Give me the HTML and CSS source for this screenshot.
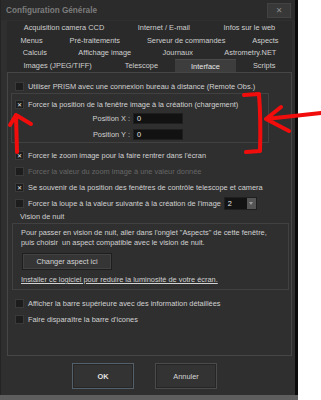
FILE: index.html
```html
<!DOCTYPE html>
<html lang="fr">
<head>
    <meta charset="UTF-8">
    <meta name="viewport" content="width=device-width, initial-scale=1.0">
    <title>Configuration Générale</title>
    <link rel="stylesheet" href="styles.css">
</head>
<body>
    <section class="window">
        <header class="title-bar">
            <span class="title">Configuration Générale</span>
            <span class="close-btn">✕</span>
        </header>

        <nav class="tabs">
            <div class="tab-row">
                <span class="tab">Acquisition camera CCD</span>
                <span class="tab">Internet / E-mail</span>
                <span class="tab">Infos sur le web</span>
            </div>
            <div class="tab-row">
                <span class="tab">Menus</span>
                <span class="tab">Pré-traitements</span>
                <span class="tab">Serveur de commandes</span>
                <span class="tab">Aspects</span>
            </div>
            <div class="tab-row">
                <span class="tab">Calculs</span>
                <span class="tab">Affichage image</span>
                <span class="tab">Journaux</span>
                <span class="tab">Astrometry.NET</span>
            </div>
            <div class="tab-row tab-row-last">
                <span class="tab">Images (JPEG/TIFF)</span>
                <span class="tab">Telescope</span>
                <span class="tab active">Interface</span>
                <span class="tab">Scripts</span>
            </div>
        </nav>

        <section class="panel">
            <div class="check-row first">
                <span class="box"></span>
                <span>Utiliser PRISM avec une connexion bureau à distance (Remote Obs.)</span>
            </div>

            <div class="group group-position">
                <div class="check-row">
                    <span class="box checked"></span>
                    <span>Forcer la position de la fenêtre image à la création (chargement)</span>
                </div>
                <div class="field-row">
                    <span class="field-label">Position X :</span>
                    <span class="field">0</span>
                </div>
                <div class="field-row field-row-y">
                    <span class="field-label">Position Y :</span>
                    <span class="field">0</span>
                </div>
            </div>

            <div class="check-row after-group">
                <span class="box checked"></span>
                <span>Forcer le zoom image pour la faire rentrer dans l'écran</span>
            </div>
            <div class="check-row disabled">
                <span class="box"></span>
                <span>Forcer la valeur du zoom image à une valeur donnée</span>
            </div>
            <div class="check-row">
                <span class="box checked"></span>
                <span>Se souvenir de la position des fenêtres de contrôle telescope et camera</span>
            </div>
            <div class="check-row">
                <span class="box"></span>
                <span>Forcer la loupe à la valeur suivante à la création de l'image</span>
                <span class="combo"><span class="combo-value">2</span><span class="combo-arrow"></span></span>
            </div>

            <div class="legend">Vision de nuit</div>
            <div class="group group-night">
                <p class="night-text">Pour passer en vision de nuit, aller dans l'onglet "Aspects" de cette fenêtre,<br>puis choisir &nbsp;un aspect compatible avec le vision de nuit.</p>
                <button class="btn btn-aspect" type="button">Changer aspect ici</button>
                <a class="night-link" href="#">Installer ce logiciel pour reduire la luminosité de votre écran.</a>
            </div>

            <div class="check-row after-night">
                <span class="box"></span>
                <span>Afficher la barre supérieure avec des information détaillées</span>
            </div>
            <div class="check-row">
                <span class="box"></span>
                <span>Faire disparaître la barre d'icones</span>
            </div>
        </section>

        <footer class="btn-box">
            <button class="btn btn-dialog btn-ok" type="submit">OK</button>
            <button class="btn btn-dialog" type="button">Annuler</button>
        </footer>
    </section>
    <div class="bottom-strip"></div>

    <!-- red marks drawn on top of the screenshot -->
    <svg class="marks" width="321" height="400" viewBox="0 0 321 400">
        <g fill="none" stroke="#f20d0d" stroke-width="4" stroke-linecap="round" stroke-linejoin="round">
            <path d="M244 95 L259 94 Q261 120 260 151 L246 152"/>
            <path d="M321 113 L266 119 M281 107 L266 119 L289 131"/>
            <path d="M17 152 L16 115 M10 125 L16 115 L31 124"/>
        </g>
    </svg>
</body>
</html>
```

FILE: styles.css
```css
body {
    margin: 0;
    background-color: white;
    font-family: "Liberation Sans", Arial, sans-serif;
    font-size: 7.4px;
    color: #d2d2d2;
}

.window {
    position: relative;
    display: flex;
    flex-direction: column;
    box-sizing: border-box;
    width: 298px;
    height: 395px;
    background-color: #2f2f2f;
    border-left: 1px solid #242424;
    border-right: 3px solid #0b0b0b;
}

.bottom-strip {
    width: 298px;
    height: 5px;
    background-color: #5e5e5e;
}

.title-bar {
    display: flex;
    align-items: center;
    justify-content: space-between;
    height: 20px;
    padding: 0 4px 0 5px;
    background-color: #2b2b2b;
}

.title {
    font-size: 8.2px;
    font-weight: bold;
    color: #7c7c7c;
}

.close-btn {
    display: flex;
    align-items: center;
    justify-content: center;
    width: 22px;
    height: 13px;
    background-color: #383838;
    border: 1px solid #424242;
    font-family: "DejaVu Sans", sans-serif;
    font-size: 8px;
    font-weight: bold;
    color: #8a8a8a;
}

.tabs {
    display: flex;
    flex-direction: column;
    margin: 1px 3px 0 6px;
    background-color: #2a2a2a;
}

.tab-row {
    display: flex;
    height: 12px;
}

.tab-row:nth-child(odd) {
    height: 13px;
}

.tab-row-last {
    height: 13px;
}

.tab {
    flex: 1 1 auto;
    display: flex;
    align-items: center;
    justify-content: center;
    white-space: nowrap;
    color: #cfcfcf;
}

.tab.active {
    background-color: #3d3d3d;
    border-top: 1px solid #4a4a4a;
    color: #e6e6e6;
}

.panel {
    display: flex;
    flex-direction: column;
    height: 284px;
    margin: 0 3px 0 6px;
    background-color: #2f2f2f;
    border: 1px solid #464646;
    box-sizing: border-box;
    padding-left: 7px;
}

.check-row {
    display: flex;
    align-items: center;
    height: 12px;
    margin-top: 4px;
    white-space: nowrap;
}

.check-row.first {
    margin-top: 7px;
}

.box {
    position: relative;
    flex: none;
    width: 7px;
    height: 7px;
    margin-right: 4px;
    background-color: #1d1d1d;
    border: 1px solid #3a3a3a;
}

.box.checked::before {
    content: "✕";
    position: absolute;
    left: 0;
    top: 0;
    width: 7px;
    line-height: 7px;
    text-align: center;
    font-family: "DejaVu Sans", sans-serif;
    font-size: 6px;
    color: #e8e8e8;
}

.disabled {
    color: #666666;
}

.group {
    box-sizing: border-box;
    border: 1px solid #414141;
}

.group-position {
    width: 258px;
    height: 50px;
    margin: 1px 0 0 -4px;
    padding-left: 3px;
}

.group-position .check-row {
    margin-top: 4px;
}

.field-row {
    display: flex;
    align-items: center;
    margin-top: 3px;
}

.field-row-y {
    margin-top: 5px;
}

.field-label {
    width: 115px;
    padding-right: 3px;
    text-align: right;
}

.field {
    box-sizing: border-box;
    width: 50px;
    height: 11px;
    padding-left: 3px;
    line-height: 10px;
    background-color: #121212;
    border: 1px solid #1e1e1e;
    color: #e6e6e6;
}

.after-group {
    margin-top: 6px;
}

.combo {
    display: flex;
    box-sizing: border-box;
    width: 33px;
    height: 13px;
    margin-left: 3px;
    background-color: #131313;
    border: 1px solid #1f1f1f;
}

.combo-value {
    flex: 1;
    padding-left: 3px;
    line-height: 11px;
    color: #e6e6e6;
}

.combo-arrow {
    position: relative;
    width: 9px;
    background-color: #555555;
}

.combo-arrow::before {
    content: "";
    position: absolute;
    left: 2px;
    top: 4px;
    border-left: 2.5px solid transparent;
    border-right: 2.5px solid transparent;
    border-top: 3px solid #9a9a9a;
}

.legend {
    height: 10px;
    margin: 3px 0 0 5px;
    line-height: 10px;
}

.group-night {
    display: flex;
    flex-direction: column;
    align-items: flex-start;
    width: 277px;
    height: 67px;
    margin: 1px 0 0 -3px;
    padding-left: 8px;
}

.night-text {
    margin: 4px 0 0 0;
    line-height: 10px;
}

.btn {
    box-sizing: border-box;
    padding: 0;
    background-color: #353535;
    border: 1px solid #1e1e1e;
    box-shadow: inset 0 0 0 1px #424242;
    font-family: inherit;
    font-size: 7.4px;
    color: #d6d6d6;
}

.btn-aspect {
    width: 90px;
    height: 17px;
    margin: 5px 0 0 1px;
}

.night-link {
    margin-top: 5px;
    line-height: 10px;
    color: #d2d2d2;
}

.after-night {
    margin-top: 7px;
}

.btn-box {
    display: flex;
    gap: 21px;
    padding: 7px 0 0 71px;
}

.btn-dialog {
    width: 62px;
    height: 26px;
    background-color: #333333;
    border: 1px solid #4b4b4b;
    box-shadow: inset 0 0 0 1px #262626;
}

.btn-ok {
    border-color: #54616b;
    font-weight: bold;
    color: #e0e0e0;
}

.marks {
    position: absolute;
    left: 0;
    top: 0;
    pointer-events: none;
}
```
